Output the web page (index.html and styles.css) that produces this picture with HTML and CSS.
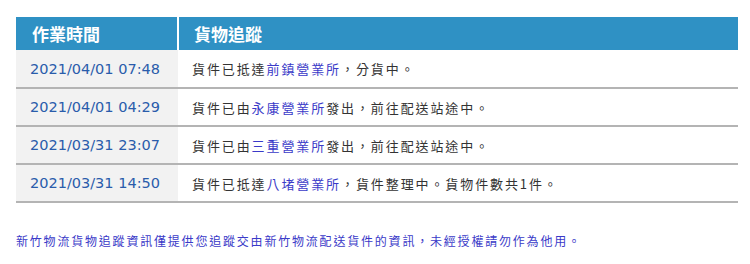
FILE: index.html
```html
<!DOCTYPE html>
<html lang="zh-Hant">
<head>
<meta charset="utf-8">
<title>貨物追蹤</title>
<link rel="stylesheet" href="styles.css">
</head>
<body>
<div class="wrap">
  <table class="track">
    <thead>
      <tr><th class="c-time">作業時間</th><th class="c-info">貨物追蹤</th></tr>
    </thead>
    <tbody>
      <tr><td class="c-time">2021/04/01 07:48</td><td class="c-info">貨件已抵達<span class="lk">前鎮營業所</span>，分貨中。</td></tr>
      <tr><td class="c-time">2021/04/01 04:29</td><td class="c-info">貨件已由<span class="lk">永康營業所</span>發出，前往配送站途中。</td></tr>
      <tr><td class="c-time">2021/03/31 23:07</td><td class="c-info">貨件已由<span class="lk">三重營業所</span>發出，前往配送站途中。</td></tr>
      <tr><td class="c-time">2021/03/31 14:50</td><td class="c-info">貨件已抵達<span class="lk">八堵營業所</span>，貨件整理中。貨物件數共1件。</td></tr>
    </tbody>
  </table>
  <p class="note">新竹物流貨物追蹤資訊僅提供您追蹤交由新竹物流配送貨件的資訊，未經授權請勿作為他用。</p>
</div>
</body>
</html>
```
FILE: styles.css
```css
html, body { margin: 0; padding: 0; background: #fff; }
body { font-family: "DejaVu Sans", "Noto Sans CJK TC", sans-serif; }
.wrap { padding: 17px 12px 0 16px; }
.track { width: 722px; border-collapse: collapse; }
.track th {
  background: #2f91c4;
  color: #fff;
  font-family: "Noto Sans CJK TC", sans-serif;
  font-weight: bold;
  font-size: 17px;
  text-align: left;
  height: 33px;
  padding: 0 0 0 15px;
  box-sizing: border-box;
  line-height: 1;
}
.track th.c-time { width: 162px; border-right: 2px solid #fff; padding-left: 16px; }
.track td {
  height: 38px;
  box-sizing: border-box;
  border-bottom: 2px solid #b4b4b4;
  padding: 0 0 0 14px;
}
.track td.c-time {
  background: #f2f2f2;
  color: #2a5cab;
  font-size: 14.5px;
  width: 162px;
}
.track td.c-info {
  color: #333;
  font-family: "Noto Sans CJK TC", sans-serif;
  font-size: 13px;
  letter-spacing: 1.9px;
}
.lk { color: #3a3ac8; }
.note {
  margin: 29px 0 0 0;
  font-family: "Noto Sans CJK TC", sans-serif;
  font-size: 12px;
  letter-spacing: 1.8px;
  color: #3a3ac8;
}
```
